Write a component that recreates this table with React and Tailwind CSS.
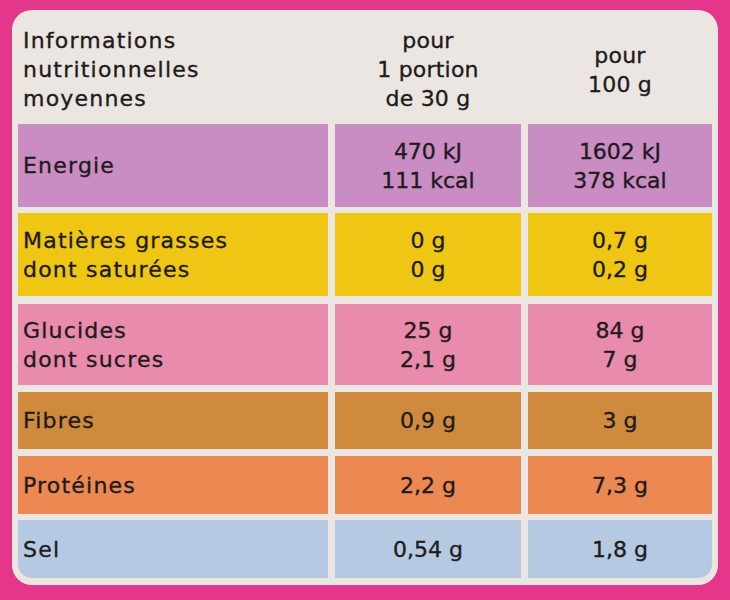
import React from 'react';

const rows = [
  { label: ['Energie'], portion: ['470 kJ', '111 kcal'], per100: ['1602 kJ', '378 kcal'], bg: 'bg-[#c98dc4]', h: 'h-[83px]', mt: 'mt-0' },
  { label: ['Matières grasses', 'dont saturées'], portion: ['0 g', '0 g'], per100: ['0,7 g', '0,2 g'], bg: 'bg-[#efc614]', h: 'h-[83px]', mt: 'mt-[6px]' },
  { label: ['Glucides', 'dont sucres'], portion: ['25 g', '2,1 g'], per100: ['84 g', '7 g'], bg: 'bg-[#e98bad]', h: 'h-[81px]', mt: 'mt-[8px]' },
  { label: ['Fibres'], portion: ['0,9 g'], per100: ['3 g'], bg: 'bg-[#cf8a3e]', h: 'h-[57px]', mt: 'mt-[7px]' },
  { label: ['Protéines'], portion: ['2,2 g'], per100: ['7,3 g'], bg: 'bg-[#ec8953]', h: 'h-[58px]', mt: 'mt-[7px]' },
  { label: ['Sel'], portion: ['0,54 g'], per100: ['1,8 g'], bg: 'bg-[#b6c9e3]', h: 'h-[58px]', mt: 'mt-[6px]' },
];

const Lines = ({ lines }) => (
  <div>
    {lines.map((l, i) => (
      <div key={i}>{l}</div>
    ))}
  </div>
);

const App = () => {
  return (
    <div className="w-[730px] h-[600px] bg-[#e4368a] pt-[10px] pl-[12px] overflow-hidden">
      <div
        className="w-[706px] h-[575px] bg-[#ebe6e1] rounded-[20px] px-[6px] pb-[7px] text-[#1f1b1b] text-[22px] leading-[29px] tracking-[0.055em] [-webkit-text-stroke:0.35px_#1f1b1b]"
        style={{ fontFamily: '"DejaVu Sans", sans-serif' }}
      >
        {/* En-tête */}
        <div className="grid grid-cols-[310px_186px_184px] gap-x-[7px] h-[114px] pt-[5px]">
          <div className="flex items-center pl-[5px]">
            <Lines lines={['Informations', 'nutritionnelles', 'moyennes']} />
          </div>
          <div className="flex items-center justify-center text-center tracking-[0.01em]">
            <Lines lines={['pour', '1 portion', 'de 30 g']} />
          </div>
          <div className="flex items-center justify-center text-center tracking-[0.01em]">
            <Lines lines={['pour', '100 g']} />
          </div>
        </div>

        {/* Lignes nutritionnelles */}
        {rows.map((r, i) => {
          const last = i === rows.length - 1;
          return (
            <div key={i} className={`grid grid-cols-[310px_186px_184px] gap-x-[7px] ${r.h} ${r.mt}`}>
              <div className={`${r.bg} flex items-center pl-[5px] ${last ? 'rounded-bl-[14px]' : ''}`}>
                <Lines lines={r.label} />
              </div>
              <div className={`${r.bg} flex items-center justify-center text-center tracking-normal`}>
                <Lines lines={r.portion} />
              </div>
              <div className={`${r.bg} flex items-center justify-center text-center tracking-normal ${last ? 'rounded-br-[14px]' : ''}`}>
                <Lines lines={r.per100} />
              </div>
            </div>
          );
        })}
      </div>
    </div>
  );
};

export default App;
